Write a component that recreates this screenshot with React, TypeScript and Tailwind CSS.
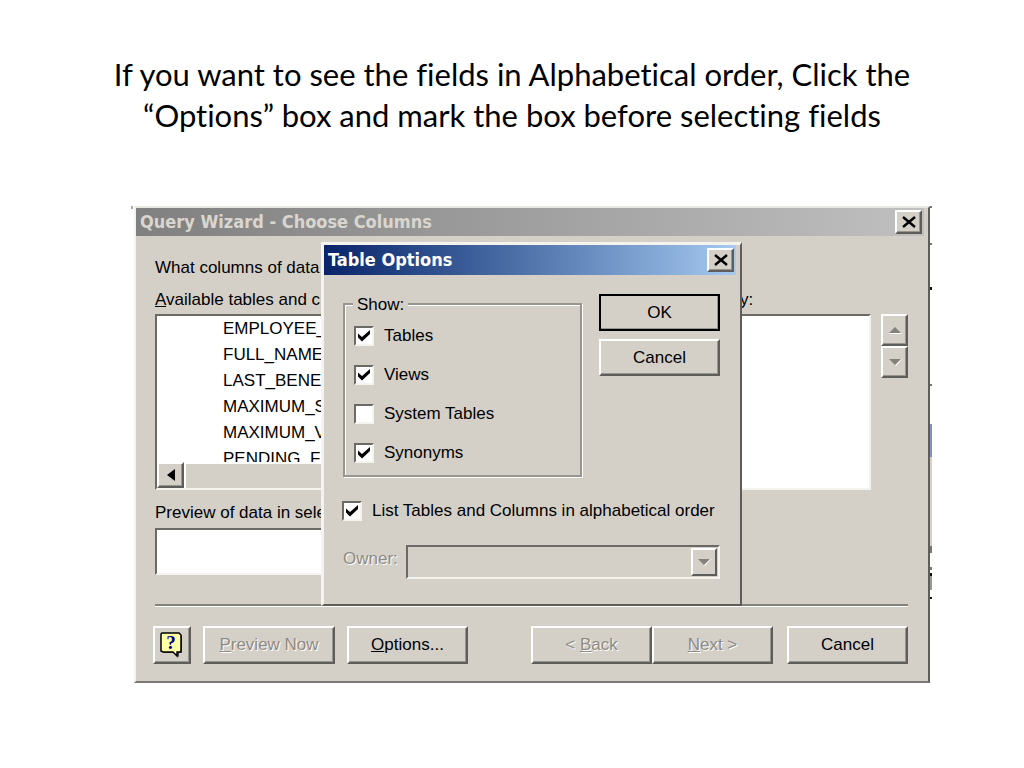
import type { ButtonHTMLAttributes, InputHTMLAttributes, ReactNode } from "react";

const sunken =
  "border-2 border-t-[#6c6a66] border-l-[#6c6a66] border-r-[#f4f3ee] border-b-[#f4f3ee]";
const disabledText = "text-[#8d8a84] [text-shadow:1px_1px_0_#fff]";

function Button({
  children,
  className = "",
  ...rest
}: { children: ReactNode } & ButtonHTMLAttributes<HTMLButtonElement>) {
  return (
    <button
      type="button"
      className={`flex shrink-0 items-center justify-center border-2 border-t-white border-l-white border-r-[#5f5d59] border-b-[#5f5d59] bg-[#d4d0c8] shadow-[inset_-1px_-1px_0_#98958e] ${className}`}
      {...rest}
    >
      {children}
    </button>
  );
}

function CloseButton() {
  return (
    <Button aria-label="Close" className="h-6 w-[27px]">
      <svg viewBox="0 0 14 12" className="h-3 w-3.5" stroke="#000" strokeWidth="2.4" fill="none">
        <path d="M1 1 L13 11 M13 1 L1 11" />
      </svg>
    </Button>
  );
}

function Check({
  label,
  ...rest
}: { label: string } & InputHTMLAttributes<HTMLInputElement>) {
  return (
    <label className="flex h-5 items-center gap-2.5">
      <span className="relative grid h-5 w-5 shrink-0">
        <input
          type="checkbox"
          className={`peer h-5 w-5 appearance-none bg-white ${sunken}`}
          {...rest}
        />
        <svg
          viewBox="0 0 12 12"
          className="pointer-events-none absolute top-1 left-1 hidden h-3 w-3 peer-checked:block"
          fill="#000"
        >
          <path d="M0 3.5 L4 7 L12 0 V4 L4 11.5 L0 7.5 Z" />
        </svg>
      </span>
      <span className="whitespace-nowrap">{label}</span>
    </label>
  );
}

function Triangle({ up = false }: { up?: boolean }) {
  return (
    <svg viewBox="0 0 14 8" className="h-2 w-3.5">
      <path d={up ? "M2 8 H14 L13 7 H1 Z" : "M14 1 L8 8 L7 7 L13 1 Z"} fill="#fff" />
      <path d={up ? "M1 7 L7 1 L13 7 Z" : "M1 1 H13 L7 7 Z"} fill="#85827c" />
    </svg>
  );
}

function HelpIcon() {
  return (
    <svg viewBox="0 0 24 26" className="h-[26px] w-6">
      <path d="M3 2 H20 L22 4 V21 H19 V25 L14 21 H4 L2 19 V3 Z" fill="#4a4a4a" />
      <path d="M2 1 H19 L21 3 V19 L20 20 H17 V24 L13 20 H3 L1 19 V2 Z" fill="#ffffa8" stroke="#000" strokeWidth="1.5" />
      <text x="11" y="17" textAnchor="middle" fontSize="19" fontWeight="700" fill="#000080" fontFamily="Liberation Serif, serif">?</text>
    </svg>
  );
}

const columns = [
  "EMPLOYEE_",
  "FULL_NAME",
  "LAST_BENE",
  "MAXIMUM_S",
  "MAXIMUM_V",
  "PENDING_F",
];

function OptionsDialog() {
  return (
    <section
      role="dialog"
      aria-label="Table Options"
      className="absolute top-[34px] left-[185px] w-[421px] border-t-[3px] border-r-2 border-b-2 border-l-[3px] border-t-[#f4f3ee] border-l-[#f4f3ee] border-r-[#5f5d59] border-b-[#5f5d59] bg-[#d4d0c8] pb-[25px]"
    >
      <header className="mr-1 flex h-[30px] items-center justify-between bg-linear-to-r from-[#0a246a] to-[#a6caf0] pr-0.5 pl-1">
        <h2 className="font-['DejaVu_Sans_Condensed','DejaVu_Sans',sans-serif] text-lg font-bold text-white">
          Table Options
        </h2>
        <CloseButton />
      </header>
      <div className="flex justify-between pt-[19px] pr-5 pl-[19px]">
        <fieldset className="relative mt-[9px] h-[174px] w-[239px] border-2 border-[#98958e] shadow-[1px_1px_0_#fff,inset_1px_1px_0_#fff]">
          <legend className="absolute -top-3 left-2 bg-[#d4d0c8] px-1 leading-6">Show:</legend>
          <div className="flex flex-col gap-[19px] pt-[21px] pl-[9px]">
            <Check label="Tables" defaultChecked />
            <Check label="Views" defaultChecked />
            <Check label="System Tables" />
            <Check label="Synonyms" defaultChecked />
          </div>
        </fieldset>
        <div className="flex flex-col gap-2">
          <Button className="h-[37px] w-[121px] outline-2 -outline-offset-2 outline-black">OK</Button>
          <Button className="h-[37px] w-[121px]">Cancel</Button>
        </div>
      </div>
      <div className="pt-6 pl-[18px]">
        <Check label="List Tables and Columns in alphabetical order" defaultChecked />
      </div>
      <div className="flex items-start gap-2 pt-6 pr-5 pl-[19px]">
        <label htmlFor="owner" className={`w-[55px] leading-7 ${disabledText}`}>
          Owner:
        </label>
        <div className="relative grow">
          <select
            id="owner"
            disabled
            className={`block h-[34px] w-full appearance-none bg-[#d4d0c8] ${sunken}`}
          />
          <span className="pointer-events-none absolute top-[3px] right-[3px] flex h-7 w-[26px] items-center justify-center border-2 border-t-white border-l-white border-r-[#5f5d59] border-b-[#5f5d59]">
            <Triangle />
          </span>
        </div>
      </div>
    </section>
  );
}

export default function App() {
  return (
    <main className="min-h-screen bg-white pt-[54px] pb-20 font-['Liberation_Sans',Arial,sans-serif] text-[17px] leading-6 text-black">
      <h1 className="text-center font-['Lato',sans-serif] text-[31px] leading-[41px] [font-variant-ligatures:none]">
        If you want to see the fields in Alphabetical order, Click the
        <br />
        “Options” box and mark the box before selecting fields
      </h1>
      <div className="pt-[70px] pr-[94px] pl-[134px]">
        <section className="relative border-2 border-t-[#e9e7e2] border-l-[#f4f3ee] border-r-[#5f5d59] border-b-[#7b7974] bg-[#d4d0c8] pb-[17px]">
          <header className="mr-1 flex h-7 items-center justify-between bg-linear-to-r from-[#808080] to-[#c0c0c0] pr-0.5 pl-1">
            <h2 className="font-['DejaVu_Sans_Condensed','DejaVu_Sans',sans-serif] text-lg font-bold text-[#d9d6cf]">
              Query Wizard - Choose Columns
            </h2>
            <CloseButton />
          </header>
          <div className="pt-5 pr-5 pl-[19px]">
            <p>What columns of data</p>
            <div className="flex pt-2">
              <div className="w-[360px]">
                <h3>
                  <u>A</u>vailable tables and c
                </h3>
                <div className={`mt-0.5 h-[176px] overflow-hidden bg-white ${sunken}`}>
                  <ul className="h-[146px] overflow-hidden pl-[66px] leading-[26px]">
                    {columns.map((name) => (
                      <li key={name}>{name}</li>
                    ))}
                  </ul>
                  <div className="flex h-[26px]">
                    <Button aria-label="Scroll left" className="h-[26px] w-[27px]">
                      <svg viewBox="0 0 8 12" className="h-3 w-2">
                        <path d="M8 0 V12 L0 6 Z" fill="#000" />
                      </svg>
                    </Button>
                    <div className="grow border-t-2 border-l-2 border-white bg-[#d4d0c8]" />
                  </div>
                </div>
              </div>
              <div className="ml-10 grow">
                <h3 className="pl-[151px]">query:</h3>
                <div className={`mt-0.5 h-[176px] bg-white ${sunken}`} />
              </div>
              <div className="ml-2.5 flex flex-col pt-[26px]">
                <Button disabled aria-label="Move up" className="h-8 w-[27px]">
                  <Triangle up />
                </Button>
                <Button disabled aria-label="Move down" className="h-8 w-[27px]">
                  <Triangle />
                </Button>
              </div>
            </div>
            <label htmlFor="preview" className="block pt-[11px]">
              Preview of data in sele
            </label>
            <input
              id="preview"
              readOnly
              className={`mt-[3px] block h-[47px] w-[500px] bg-white ${sunken}`}
            />
            <hr className="mt-[29px] border-t-2 border-[#85827c] shadow-[0_1px_0_#fff]" />
            <div className="-ml-0.5 flex pt-5">
              <Button aria-label="Help" className="h-[38px] w-[38px]">
                <HelpIcon />
              </Button>
              <Button disabled className={`ml-3 h-[38px] w-[132px] ${disabledText}`}>
                <span><u>P</u>review Now</span>
              </Button>
              <Button className="ml-3 h-[38px] w-[121px]">
                <span><u>O</u>ptions...</span>
              </Button>
              <Button disabled className={`ml-auto h-[38px] w-[121px] ${disabledText}`}>
                <span>&lt; <u>B</u>ack</span>
              </Button>
              <Button disabled className={`h-[38px] w-[121px] ${disabledText}`}>
                <span><u>N</u>ext &gt;</span>
              </Button>
              <Button className="ml-[14px] h-[38px] w-[121px]">Cancel</Button>
            </div>
          </div>
          <OptionsDialog />
          <svg viewBox="0 0 3 477" className="absolute -top-0.5 -right-[5px] h-[477px] w-[3px]">
            <path d="M0 0h2v2h-2z M0 37h2v2h-2z M0 178h2v2h-2z M0 340h2v7h-2z M0 361h2v3h-2z" fill="#777" />
            <path d="M0 81h2v3h-2z M0 367h2v3h-2z M0 391h2v2h-2z" fill="#111" />
            <path d="M0 218h2v33h-2z" fill="#7f93c8" />
            <path d="M0 251h2v89h-2z" fill="#d4d0c8" />
            <path d="M0 370h2v14h-2z" fill="#999" />
          </svg>
          <svg viewBox="0 0 3 4" className="absolute -top-0.5 -left-[5px] h-1 w-[3px]">
            <path d="M0 0h2v3h-2z" fill="#aaa" />
          </svg>
        </section>
      </div>
    </main>
  );
}
